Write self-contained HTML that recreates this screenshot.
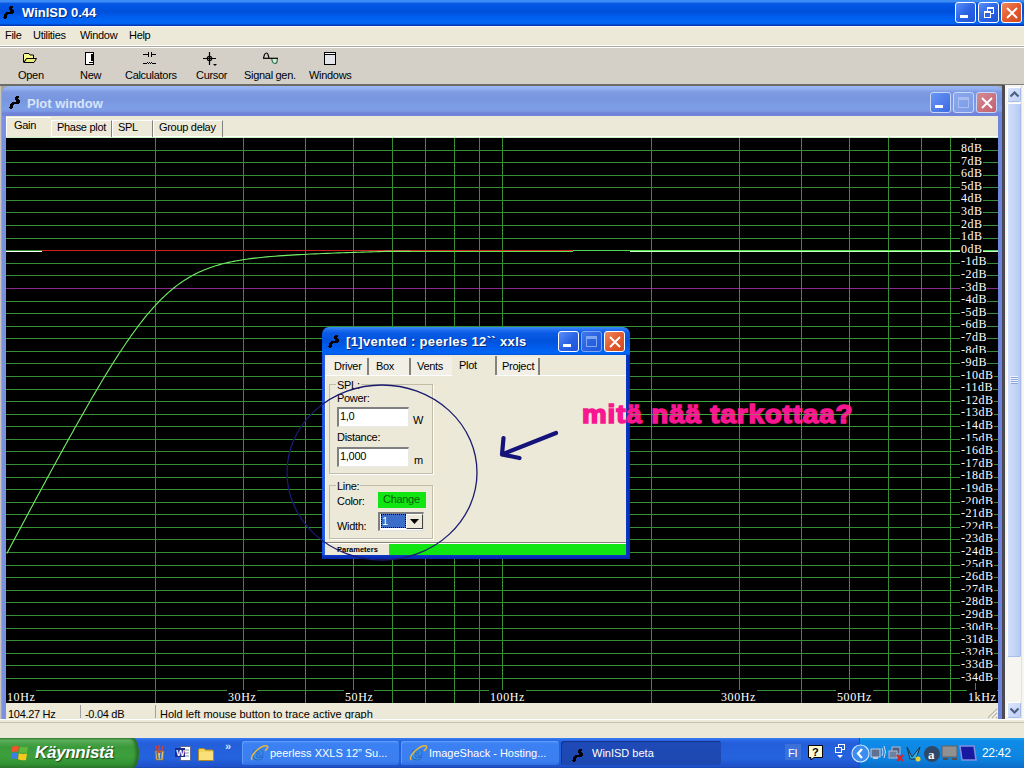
<!DOCTYPE html>
<html><head><meta charset="utf-8"><title>WinISD</title>
<style>
html,body{margin:0;padding:0;}
body{width:1024px;height:768px;overflow:hidden;position:relative;background:#D4D0C8;font-family:"Liberation Sans", sans-serif;font-size:11px;color:#000;}
.a{position:absolute;}
.t{position:absolute;white-space:nowrap;line-height:13px;letter-spacing:-0.3px;}
.xpbtn{position:absolute;width:21px;height:21px;box-sizing:border-box;border:1px solid #fff;border-radius:3px;}
.tb .t{font-size:11px;}
</style></head><body>

<div class="a" style="left:0;top:0;width:1024px;height:26px;background:linear-gradient(#3D8CF6 0px,#3D8CF6 2px,#0A5AE4 3px,#0055E4 6px,#0050DA 12px,#005CEC 16px,#0066F6 22px,#0060F0 24px,#0038B0 25px,#0038B0 26px);"></div>
<div class="t" style="left:22px;top:5px;font-size:13px;font-weight:bold;color:#fff;text-shadow:1px 1px 0 #0A2A7A;line-height:16px;letter-spacing:0;">WinISD 0.44</div>

<svg class="a" style="left:3px;top:6px" width="11" height="13" shape-rendering="crispEdges" fill="#000"><rect x="7" y="0" width="3" height="1"/><rect x="6" y="1" width="4" height="1"/><rect x="6" y="2" width="3" height="1"/><rect x="6" y="3" width="4" height="1"/><rect x="7" y="4" width="4" height="1"/><rect x="7" y="5" width="4" height="1"/><rect x="3" y="6" width="8" height="1"/><rect x="2" y="7" width="8" height="1"/><rect x="1" y="8" width="4" height="1"/><rect x="1" y="9" width="3" height="1"/><rect x="1" y="10" width="3" height="1"/><rect x="0" y="11" width="4" height="1"/><rect x="1" y="12" width="2" height="1"/></svg>
<div class="xpbtn" style="left:955px;top:2px;background:linear-gradient(135deg,#5C8FF8 0%,#2C64E6 50%,#1E52D8 100%);border-color:#fff"><div class="a" style="left:4px;top:12px;width:8px;height:3px;background:#fff"></div></div><div class="xpbtn" style="left:978px;top:2px;background:linear-gradient(135deg,#5C8FF8 0%,#2C64E6 50%,#1E52D8 100%);border-color:#fff"><div class="a" style="left:8px;top:4px;width:7px;height:7px;border:1px solid #fff;border-top-width:2px;box-sizing:border-box"></div><div class="a" style="left:5px;top:8px;width:7px;height:7px;border:1px solid #fff;border-top-width:2px;box-sizing:border-box;background:#2C64E6"></div></div><div class="xpbtn" style="left:1001px;top:2px;background:linear-gradient(135deg,#F08A60 0%,#E35A2E 50%,#D24A1E 100%);border-color:#fff"><svg class="a" style="left:3px;top:3px" width="14" height="14"><path d="M2 2 L12 12 M12 2 L2 12" stroke="#fff" stroke-width="1.9"/></svg></div>
<div class="a" style="left:0;top:26px;width:1024px;height:20px;background:#ECE9D8"></div>
<div class="a" style="left:0;top:26px;width:1024px;height:1px;background:#F4F6FC"></div>
<div class="a" style="left:0;top:45px;width:1024px;height:1px;background:#fff"></div>
<div class="a" style="left:0;top:46px;width:1024px;height:1px;background:#ACA899"></div>
<div class="a" style="left:0;top:47px;width:1024px;height:1px;background:#fff"></div>
<div class="t" style="left:5px;top:29px;">File</div>
<div class="t" style="left:33px;top:29px;">Utilities</div>
<div class="t" style="left:80px;top:29px;">Window</div>
<div class="t" style="left:129px;top:29px;">Help</div>
<div class="a" style="left:0;top:48px;width:1024px;height:37px;background:#D4D0C8"></div>
<div class="a" style="left:0;top:84px;width:1024px;height:1px;background:#808080"></div>
<div class="t" style="left:18px;top:69px;">Open</div>
<div class="t" style="left:80px;top:69px;">New</div>
<div class="t" style="left:125px;top:69px;">Calculators</div>
<div class="t" style="left:196px;top:69px;">Cursor</div>
<div class="t" style="left:244px;top:69px;">Signal gen.</div>
<div class="t" style="left:309px;top:69px;">Windows</div>
<svg class="a" style="left:22px;top:52px" width="16" height="12"><path d="M1.5 2.5 L2.5 1.5 L7 1.5 L8 3 L11.5 3 L11.5 6.5 L4.5 6.5 L2 10.5 L1.5 10 Z" fill="#F8F890" stroke="#000"/><path d="M4.5 6.5 L14.5 6.5 L12 10.5 L2 10.5 Z" fill="#ECEC80" stroke="#000"/></svg>
<svg class="a" style="left:85px;top:52px" width="9" height="13" shape-rendering="crispEdges"><rect x="0" y="0" width="9" height="13" fill="#000"/><rect x="1" y="1" width="7" height="1" fill="#fff"/><rect x="1" y="1" width="5" height="11" fill="#fff"/><rect x="6" y="2" width="2" height="7" fill="#000"/><rect x="4" y="9" width="4" height="1" fill="#fff"/><rect x="4" y="10" width="4" height="1" fill="#000"/><rect x="4" y="11" width="4" height="1" fill="#fff"/><rect x="4" y="12" width="1" height="0" fill="#fff"/></svg>
<svg class="a" style="left:142px;top:51px" width="16" height="14" shape-rendering="crispEdges"><rect x="1" y="3" width="6" height="1" fill="#000"/><rect x="9" y="3" width="5" height="1" fill="#000"/><rect x="6" y="1" width="1" height="5" fill="#000"/><rect x="9" y="1" width="1" height="5" fill="#000"/><rect x="1" y="12" width="4" height="1" fill="#000"/><rect x="11" y="12" width="3" height="1" fill="#000"/><rect x="5" y="11" width="1" height="1" fill="#000"/><rect x="6" y="12" width="1" height="1" fill="#000"/><rect x="7" y="11" width="1" height="1" fill="#000"/><rect x="8" y="12" width="1" height="1" fill="#000"/><rect x="9" y="11" width="1" height="1" fill="#000"/><rect x="10" y="12" width="1" height="1" fill="#000"/></svg>
<svg class="a" style="left:202px;top:51px" width="17" height="17"><path d="M1 7.5 H14 M7.5 1 V14" stroke="#000" stroke-width="1.2"/><circle cx="7.5" cy="7.5" r="2.2" fill="none" stroke="#000" stroke-width="1.2"/><path d="M11 13 L15 13 L13 15 Z" fill="#000"/></svg>
<svg class="a" style="left:262px;top:52px" width="18" height="13"><path d="M9.5 6 L10.5 10 Q11.5 11.5 13 11.5 Q14.5 11.5 15 10 L15.5 6" stroke="#2A6A48" fill="#D0ECD8" stroke-width="1.1"/><path d="M1.5 6 L2.5 2.5 Q3.5 1 4.5 1 Q5.5 1 6 2.5 L7 6" stroke="#000" fill="none" stroke-width="1.1"/><path d="M1 6.3 H16" stroke="#000" stroke-width="1.2"/></svg>
<svg class="a" style="left:324px;top:52px" width="12" height="13" shape-rendering="crispEdges"><rect width="12" height="13" fill="#000"/><rect x="1" y="1" width="10" height="1" fill="#fff"/><rect x="1" y="3" width="10" height="9" fill="#E4E4EC"/></svg>

<div class="a" style="left:0;top:85px;width:1003px;height:634px;background:#A8A498"></div>
<div class="a" style="left:0;top:84px;width:1003px;height:2px;background:#6E6C66"></div>
<div class="a" style="left:0;top:86px;width:1px;height:633px;background:#CAC6BA"></div>
<div class="a" style="left:2px;top:86px;width:1001px;height:640px;border-radius:7px 7px 0 0;background:linear-gradient(#9AB6F4 0px,#93B0F2 3px,#7E9AE2 6px,#7896E0 14px,#7E9FE8 22px,#7C9AE4 25px,#6F84D8 27px,#6F84D8 30px);"></div>
<div class="a" style="left:2px;top:116px;width:1001px;height:610px;background:linear-gradient(90deg,#7A90E4,#7388E0 60%,#6F84DC)"></div>
<div class="t" style="left:27px;top:96px;font-size:13px;font-weight:bold;color:#D8E4F8;line-height:16px;letter-spacing:0;">Plot window</div>
<svg class="a" style="left:9px;top:96px" width="11" height="13" shape-rendering="crispEdges" fill="#000"><rect x="7" y="0" width="3" height="1"/><rect x="6" y="1" width="4" height="1"/><rect x="6" y="2" width="3" height="1"/><rect x="6" y="3" width="4" height="1"/><rect x="7" y="4" width="4" height="1"/><rect x="7" y="5" width="4" height="1"/><rect x="3" y="6" width="8" height="1"/><rect x="2" y="7" width="8" height="1"/><rect x="1" y="8" width="4" height="1"/><rect x="1" y="9" width="3" height="1"/><rect x="1" y="10" width="3" height="1"/><rect x="0" y="11" width="4" height="1"/><rect x="1" y="12" width="2" height="1"/></svg>
<div class="xpbtn" style="left:930px;top:92px;background:linear-gradient(135deg,#6A96F4,#3A6AE2);border-color:#C8D6F8"><div class="a" style="left:4px;top:12px;width:8px;height:3px;background:#fff"></div></div><div class="xpbtn" style="left:953px;top:92px;background:linear-gradient(135deg,#8AA8EC,#7C9BE6);border-color:#C8D6F8"><div class="a" style="left:4px;top:4px;width:11px;height:11px;border:1px solid #A9BEEF;border-top-width:3px;box-sizing:border-box"></div></div><div class="xpbtn" style="left:976px;top:92px;background:linear-gradient(135deg,#D58A95,#C0606E);border-color:#C8D6F8"><svg class="a" style="left:3px;top:3px" width="14" height="14"><path d="M2 2 L12 12 M12 2 L2 12" stroke="#fff" stroke-width="1.9"/></svg></div>
<div class="a" style="left:6px;top:116px;width:992px;height:21px;background:#ECE9D8"></div>
<div class="a" style="left:6px;top:136px;width:992px;height:1px;background:#fff"></div>
<div class="a" style="left:6px;top:117px;width:44px;height:20px;background:#ECE9D8;border-top:1px solid #fff;border-left:1px solid #fff"></div>
<div class="t" style="left:14px;top:119px;">Gain</div>
<div class="a" style="left:51px;top:120px;width:59px;height:16px;border-top:1px solid #fff;border-left:1px solid #fff;border-right:1px solid #808080;"></div>
<div class="t" style="left:57px;top:121px;">Phase plot</div>
<div class="a" style="left:112px;top:120px;width:39px;height:16px;border-top:1px solid #fff;border-left:1px solid #fff;border-right:1px solid #808080;"></div>
<div class="t" style="left:118px;top:121px;">SPL</div>
<div class="a" style="left:153px;top:120px;width:68px;height:16px;border-top:1px solid #fff;border-left:1px solid #fff;border-right:1px solid #808080;"></div>
<div class="t" style="left:159px;top:121px;">Group delay</div>
<svg class="a" style="left:6px;top:137px" width="992" height="566" shape-rendering="crispEdges">
<rect width="992" height="566" fill="#000"/>
<rect x="0" y="0" width="992" height="1" fill="#C8F0C0"/>
<rect x="0" y="13" width="992" height="1" fill="#359035"/>
<rect x="0" y="25" width="992" height="1" fill="#359035"/>
<rect x="0" y="38" width="992" height="1" fill="#359035"/>
<rect x="0" y="50" width="992" height="1" fill="#359035"/>
<rect x="0" y="63" width="992" height="1" fill="#359035"/>
<rect x="0" y="75" width="992" height="1" fill="#359035"/>
<rect x="0" y="88" width="992" height="1" fill="#359035"/>
<rect x="0" y="101" width="992" height="1" fill="#359035"/>
<rect x="0" y="113" width="992" height="1" fill="#359035"/>
<rect x="0" y="126" width="992" height="1" fill="#359035"/>
<rect x="0" y="138" width="992" height="1" fill="#359035"/>
<rect x="0" y="151" width="992" height="1" fill="#8A2A8A"/>
<rect x="0" y="164" width="992" height="1" fill="#359035"/>
<rect x="0" y="176" width="992" height="1" fill="#359035"/>
<rect x="0" y="189" width="992" height="1" fill="#359035"/>
<rect x="0" y="201" width="992" height="1" fill="#359035"/>
<rect x="0" y="214" width="992" height="1" fill="#359035"/>
<rect x="0" y="226" width="992" height="1" fill="#359035"/>
<rect x="0" y="239" width="992" height="1" fill="#359035"/>
<rect x="0" y="252" width="992" height="1" fill="#359035"/>
<rect x="0" y="264" width="992" height="1" fill="#359035"/>
<rect x="0" y="277" width="992" height="1" fill="#359035"/>
<rect x="0" y="289" width="992" height="1" fill="#359035"/>
<rect x="0" y="302" width="992" height="1" fill="#359035"/>
<rect x="0" y="314" width="992" height="1" fill="#359035"/>
<rect x="0" y="327" width="992" height="1" fill="#359035"/>
<rect x="0" y="340" width="992" height="1" fill="#359035"/>
<rect x="0" y="352" width="992" height="1" fill="#359035"/>
<rect x="0" y="365" width="992" height="1" fill="#359035"/>
<rect x="0" y="377" width="992" height="1" fill="#359035"/>
<rect x="0" y="390" width="992" height="1" fill="#359035"/>
<rect x="0" y="402" width="992" height="1" fill="#359035"/>
<rect x="0" y="415" width="992" height="1" fill="#359035"/>
<rect x="0" y="428" width="992" height="1" fill="#359035"/>
<rect x="0" y="440" width="992" height="1" fill="#359035"/>
<rect x="0" y="453" width="992" height="1" fill="#359035"/>
<rect x="0" y="465" width="992" height="1" fill="#359035"/>
<rect x="0" y="478" width="992" height="1" fill="#359035"/>
<rect x="0" y="491" width="992" height="1" fill="#359035"/>
<rect x="0" y="503" width="992" height="1" fill="#359035"/>
<rect x="0" y="516" width="992" height="1" fill="#359035"/>
<rect x="0" y="528" width="992" height="1" fill="#359035"/>
<rect x="0" y="541" width="992" height="1" fill="#359035"/>
<rect x="0" y="553" width="992" height="1" fill="#359035"/>
<rect x="149" y="1" width="1" height="566" fill="#359035"/>
<rect x="237" y="1" width="1" height="566" fill="#359035"/>
<rect x="299" y="1" width="1" height="566" fill="#359035"/>
<rect x="347" y="1" width="1" height="566" fill="#359035"/>
<rect x="386" y="1" width="1" height="566" fill="#359035"/>
<rect x="419" y="1" width="1" height="566" fill="#359035"/>
<rect x="448" y="1" width="1" height="566" fill="#359035"/>
<rect x="473" y="1" width="1" height="566" fill="#359035"/>
<rect x="496" y="1" width="1" height="566" fill="#359035"/>
<rect x="645" y="1" width="1" height="566" fill="#359035"/>
<rect x="733" y="1" width="1" height="566" fill="#359035"/>
<rect x="795" y="1" width="1" height="566" fill="#359035"/>
<rect x="843" y="1" width="1" height="566" fill="#359035"/>
<rect x="882" y="1" width="1" height="566" fill="#359035"/>
<rect x="915" y="1" width="1" height="566" fill="#359035"/>
<rect x="944" y="1" width="1" height="566" fill="#359035"/>
<rect x="969" y="1" width="1" height="566" fill="#359035"/>
<rect x="0" y="114" width="36" height="1" fill="#fff"/>
<rect x="36" y="113" width="531" height="1" fill="#D02020"/>
<rect x="404" y="114" width="163" height="1" fill="#60E050"/>
<rect x="567" y="113" width="425" height="1" fill="#50D850"/>
<rect x="624" y="114" width="368" height="1" fill="#C8FFC0"/>
<path d="M0.80 416.61 L1.80 414.73 L2.80 412.84 L3.80 410.96 L4.80 409.08 L5.80 407.20 L6.80 405.31 L7.80 403.43 L8.80 401.55 L9.80 399.68 L10.80 397.80 L11.80 395.92 L12.80 394.05 L13.80 392.17 L14.80 390.30 L15.80 388.42 L16.80 386.55 L17.80 384.68 L18.80 382.81 L19.80 380.94 L20.80 379.07 L21.80 377.21 L22.80 375.34 L23.80 373.47 L24.80 371.61 L25.80 369.75 L26.80 367.89 L27.80 366.03 L28.80 364.17 L29.80 362.31 L30.80 360.45 L31.80 358.60 L32.80 356.74 L33.80 354.89 L34.80 353.04 L35.80 351.18 L36.80 349.34 L37.80 347.49 L38.80 345.64 L39.80 343.80 L40.80 341.95 L41.80 340.11 L42.80 338.27 L43.80 336.43 L44.80 334.59 L45.80 332.76 L46.80 330.92 L47.80 329.09 L48.80 327.26 L49.80 325.43 L50.80 323.61 L51.80 321.78 L52.80 319.96 L53.80 318.14 L54.80 316.32 L55.80 314.50 L56.80 312.68 L57.80 310.87 L58.80 309.06 L59.80 307.25 L60.80 305.45 L61.80 303.64 L62.80 301.84 L63.80 300.04 L64.80 298.25 L65.80 296.45 L66.80 294.66 L67.80 292.88 L68.80 291.09 L69.80 289.31 L70.80 287.53 L71.80 285.76 L72.80 283.98 L73.80 282.21 L74.80 280.45 L75.80 278.69 L76.80 276.93 L77.80 275.17 L78.80 273.42 L79.80 271.68 L80.80 269.93 L81.80 268.19 L82.80 266.46 L83.80 264.73 L84.80 263.00 L85.80 261.28 L86.80 259.56 L87.80 257.85 L88.80 256.14 L89.80 254.44 L90.80 252.74 L91.80 251.05 L92.80 249.37 L93.80 247.69 L94.80 246.01 L95.80 244.34 L96.80 242.68 L97.80 241.02 L98.80 239.37 L99.80 237.73 L100.80 236.09 L101.80 234.46 L102.80 232.84 L103.80 231.22 L104.80 229.62 L105.80 228.01 L106.80 226.42 L107.80 224.84 L108.80 223.26 L109.80 221.69 L110.80 220.13 L111.80 218.58 L112.80 217.04 L113.80 215.50 L114.80 213.98 L115.80 212.46 L116.80 210.96 L117.80 209.46 L118.80 207.97 L119.80 206.50 L120.80 205.03 L121.80 203.58 L122.80 202.14 L123.80 200.70 L124.80 199.28 L125.80 197.87 L126.80 196.47 L127.80 195.09 L128.80 193.71 L129.80 192.35 L130.80 191.00 L131.80 189.66 L132.80 188.34 L133.80 187.03 L134.80 185.73 L135.80 184.44 L136.80 183.17 L137.80 181.91 L138.80 180.66 L139.80 179.43 L140.80 178.22 L141.80 177.01 L142.80 175.82 L143.80 174.65 L144.80 173.49 L145.80 172.35 L146.80 171.22 L147.80 170.10 L148.80 169.00 L149.80 167.91 L150.80 166.84 L151.80 165.79 L152.80 164.75 L153.80 163.72 L154.80 162.71 L155.80 161.72 L156.80 160.74 L157.80 159.78 L158.80 158.83 L159.80 157.90 L160.80 156.98 L161.80 156.08 L162.80 155.19 L163.80 154.32 L164.80 153.47 L165.80 152.63 L166.80 151.80 L167.80 150.99 L168.80 150.20 L169.80 149.42 L170.80 148.65 L171.80 147.90 L172.80 147.17 L173.80 146.44 L174.80 145.74 L175.80 145.05 L176.80 144.37 L177.80 143.70 L178.80 143.05 L179.80 142.42 L180.80 141.79 L181.80 141.18 L182.80 140.59 L183.80 140.00 L184.80 139.43 L185.80 138.87 L186.80 138.33 L187.80 137.79 L188.80 137.27 L189.80 136.76 L190.80 136.27 L191.80 135.78 L192.80 135.31 L193.80 134.84 L194.80 134.39 L195.80 133.95 L196.80 133.52 L197.80 133.10 L198.80 132.69 L199.80 132.29 L200.80 131.90 L201.80 131.52 L202.80 131.14 L203.80 130.78 L204.80 130.43 L205.80 130.08 L206.80 129.75 L207.80 129.42 L208.80 129.10 L209.80 128.79 L210.80 128.48 L211.80 128.19 L212.80 127.90 L213.80 127.62 L214.80 127.34 L215.80 127.08 L216.80 126.82 L217.80 126.56 L218.80 126.31 L219.80 126.07 L220.80 125.84 L221.80 125.61 L222.80 125.38 L223.80 125.16 L224.80 124.95 L225.80 124.74 L226.80 124.54 L227.80 124.34 L228.80 124.15 L229.80 123.96 L230.80 123.78 L231.80 123.60 L232.80 123.43 L233.80 123.26 L234.80 123.09 L235.80 122.93 L236.80 122.77 L237.80 122.62 L238.80 122.47 L239.80 122.32 L240.80 122.18 L241.80 122.04 L242.80 121.90 L243.80 121.77 L244.80 121.64 L248.80 121.14 L252.80 120.69 L256.80 120.28 L260.80 119.90 L264.80 119.54 L268.80 119.22 L272.80 118.92 L276.80 118.63 L280.80 118.37 L284.80 118.12 L288.80 117.88 L292.80 117.66 L296.80 117.45 L300.80 117.24 L304.80 117.05 L308.80 116.87 L312.80 116.69 L316.80 116.52 L320.80 116.35 L324.80 116.20 L328.80 116.04 L332.80 115.89 L336.80 115.75 L340.80 115.61 L344.80 115.47 L348.80 115.34 L352.80 115.21 L356.80 115.08 L360.80 114.96 L364.80 114.84 L368.80 114.73 L372.80 114.61 L376.80 114.50 L380.80 114.40 L384.80 114.33 L388.80 114.33 L392.80 114.33 L396.80 114.33 L400.80 114.33 L404.80 114.33" stroke="#74F068" stroke-width="1.1" fill="none" shape-rendering="auto"/>
</svg>
<div class="t" style="left:960px;top:140px;height:13px;padding-top:2px;font-family:'Liberation Serif', serif;font-size:12px;line-height:12px;color:#fff;background:#000;padding-left:1px;letter-spacing:0.5px">8dB</div>
<div class="t" style="left:960px;top:152px;height:12px;padding-top:3px;font-family:'Liberation Serif', serif;font-size:12px;line-height:12px;color:#fff;background:#000;padding-left:1px;letter-spacing:0.5px">7dB</div>
<div class="t" style="left:960px;top:165px;height:13px;padding-top:2px;font-family:'Liberation Serif', serif;font-size:12px;line-height:12px;color:#fff;background:#000;padding-left:1px;letter-spacing:0.5px">6dB</div>
<div class="t" style="left:960px;top:177px;height:12px;padding-top:3px;font-family:'Liberation Serif', serif;font-size:12px;line-height:12px;color:#fff;background:#000;padding-left:1px;letter-spacing:0.5px">5dB</div>
<div class="t" style="left:960px;top:190px;height:13px;padding-top:2px;font-family:'Liberation Serif', serif;font-size:12px;line-height:12px;color:#fff;background:#000;padding-left:1px;letter-spacing:0.5px">4dB</div>
<div class="t" style="left:960px;top:202px;height:12px;padding-top:3px;font-family:'Liberation Serif', serif;font-size:12px;line-height:12px;color:#fff;background:#000;padding-left:1px;letter-spacing:0.5px">3dB</div>
<div class="t" style="left:960px;top:215px;height:12px;padding-top:3px;font-family:'Liberation Serif', serif;font-size:12px;line-height:12px;color:#fff;background:#000;padding-left:1px;letter-spacing:0.5px">2dB</div>
<div class="t" style="left:960px;top:228px;height:13px;padding-top:2px;font-family:'Liberation Serif', serif;font-size:12px;line-height:12px;color:#fff;background:#000;padding-left:1px;letter-spacing:0.5px">1dB</div>
<div class="t" style="left:960px;top:240px;height:12px;padding-top:3px;font-family:'Liberation Serif', serif;font-size:12px;line-height:12px;color:#fff;background:#000;padding-left:1px;letter-spacing:0.5px">0dB</div>
<div class="t" style="left:960px;top:253px;height:13px;padding-top:2px;font-family:'Liberation Serif', serif;font-size:12px;line-height:12px;color:#fff;background:#000;padding-left:1px;letter-spacing:0.5px">-1dB</div>
<div class="t" style="left:960px;top:265px;height:12px;padding-top:3px;font-family:'Liberation Serif', serif;font-size:12px;line-height:12px;color:#fff;background:#000;padding-left:1px;letter-spacing:0.5px">-2dB</div>
<div class="t" style="left:960px;top:278px;height:12px;padding-top:3px;font-family:'Liberation Serif', serif;font-size:12px;line-height:12px;color:#fff;background:#000;padding-left:1px;letter-spacing:0.5px">-3dB</div>
<div class="t" style="left:960px;top:291px;height:13px;padding-top:2px;font-family:'Liberation Serif', serif;font-size:12px;line-height:12px;color:#fff;background:#000;padding-left:1px;letter-spacing:0.5px">-4dB</div>
<div class="t" style="left:960px;top:303px;height:12px;padding-top:3px;font-family:'Liberation Serif', serif;font-size:12px;line-height:12px;color:#fff;background:#000;padding-left:1px;letter-spacing:0.5px">-5dB</div>
<div class="t" style="left:960px;top:316px;height:13px;padding-top:2px;font-family:'Liberation Serif', serif;font-size:12px;line-height:12px;color:#fff;background:#000;padding-left:1px;letter-spacing:0.5px">-6dB</div>
<div class="t" style="left:960px;top:328px;height:12px;padding-top:3px;font-family:'Liberation Serif', serif;font-size:12px;line-height:12px;color:#fff;background:#000;padding-left:1px;letter-spacing:0.5px">-7dB</div>
<div class="t" style="left:960px;top:341px;height:12px;padding-top:3px;font-family:'Liberation Serif', serif;font-size:12px;line-height:12px;color:#fff;background:#000;padding-left:1px;letter-spacing:0.5px">-8dB</div>
<div class="t" style="left:960px;top:353px;height:12px;padding-top:3px;font-family:'Liberation Serif', serif;font-size:12px;line-height:12px;color:#fff;background:#000;padding-left:1px;letter-spacing:0.5px">-9dB</div>
<div class="t" style="left:960px;top:366px;height:12px;padding-top:3px;font-family:'Liberation Serif', serif;font-size:12px;line-height:12px;color:#fff;background:#000;padding-left:1px;letter-spacing:0.5px">-10dB</div>
<div class="t" style="left:960px;top:379px;height:13px;padding-top:2px;font-family:'Liberation Serif', serif;font-size:12px;line-height:12px;color:#fff;background:#000;padding-left:1px;letter-spacing:0.5px">-11dB</div>
<div class="t" style="left:960px;top:391px;height:12px;padding-top:3px;font-family:'Liberation Serif', serif;font-size:12px;line-height:12px;color:#fff;background:#000;padding-left:1px;letter-spacing:0.5px">-12dB</div>
<div class="t" style="left:960px;top:404px;height:13px;padding-top:2px;font-family:'Liberation Serif', serif;font-size:12px;line-height:12px;color:#fff;background:#000;padding-left:1px;letter-spacing:0.5px">-13dB</div>
<div class="t" style="left:960px;top:416px;height:12px;padding-top:3px;font-family:'Liberation Serif', serif;font-size:12px;line-height:12px;color:#fff;background:#000;padding-left:1px;letter-spacing:0.5px">-14dB</div>
<div class="t" style="left:960px;top:429px;height:12px;padding-top:3px;font-family:'Liberation Serif', serif;font-size:12px;line-height:12px;color:#fff;background:#000;padding-left:1px;letter-spacing:0.5px">-15dB</div>
<div class="t" style="left:960px;top:441px;height:12px;padding-top:3px;font-family:'Liberation Serif', serif;font-size:12px;line-height:12px;color:#fff;background:#000;padding-left:1px;letter-spacing:0.5px">-16dB</div>
<div class="t" style="left:960px;top:454px;height:12px;padding-top:3px;font-family:'Liberation Serif', serif;font-size:12px;line-height:12px;color:#fff;background:#000;padding-left:1px;letter-spacing:0.5px">-17dB</div>
<div class="t" style="left:960px;top:467px;height:13px;padding-top:2px;font-family:'Liberation Serif', serif;font-size:12px;line-height:12px;color:#fff;background:#000;padding-left:1px;letter-spacing:0.5px">-18dB</div>
<div class="t" style="left:960px;top:479px;height:12px;padding-top:3px;font-family:'Liberation Serif', serif;font-size:12px;line-height:12px;color:#fff;background:#000;padding-left:1px;letter-spacing:0.5px">-19dB</div>
<div class="t" style="left:960px;top:492px;height:12px;padding-top:3px;font-family:'Liberation Serif', serif;font-size:12px;line-height:12px;color:#fff;background:#000;padding-left:1px;letter-spacing:0.5px">-20dB</div>
<div class="t" style="left:960px;top:504px;height:12px;padding-top:3px;font-family:'Liberation Serif', serif;font-size:12px;line-height:12px;color:#fff;background:#000;padding-left:1px;letter-spacing:0.5px">-21dB</div>
<div class="t" style="left:960px;top:517px;height:12px;padding-top:3px;font-family:'Liberation Serif', serif;font-size:12px;line-height:12px;color:#fff;background:#000;padding-left:1px;letter-spacing:0.5px">-22dB</div>
<div class="t" style="left:960px;top:529px;height:12px;padding-top:3px;font-family:'Liberation Serif', serif;font-size:12px;line-height:12px;color:#fff;background:#000;padding-left:1px;letter-spacing:0.5px">-23dB</div>
<div class="t" style="left:960px;top:542px;height:12px;padding-top:3px;font-family:'Liberation Serif', serif;font-size:12px;line-height:12px;color:#fff;background:#000;padding-left:1px;letter-spacing:0.5px">-24dB</div>
<div class="t" style="left:960px;top:555px;height:12px;padding-top:3px;font-family:'Liberation Serif', serif;font-size:12px;line-height:12px;color:#fff;background:#000;padding-left:1px;letter-spacing:0.5px">-25dB</div>
<div class="t" style="left:960px;top:567px;height:12px;padding-top:3px;font-family:'Liberation Serif', serif;font-size:12px;line-height:12px;color:#fff;background:#000;padding-left:1px;letter-spacing:0.5px">-26dB</div>
<div class="t" style="left:960px;top:580px;height:12px;padding-top:3px;font-family:'Liberation Serif', serif;font-size:12px;line-height:12px;color:#fff;background:#000;padding-left:1px;letter-spacing:0.5px">-27dB</div>
<div class="t" style="left:960px;top:592px;height:12px;padding-top:3px;font-family:'Liberation Serif', serif;font-size:12px;line-height:12px;color:#fff;background:#000;padding-left:1px;letter-spacing:0.5px">-28dB</div>
<div class="t" style="left:960px;top:605px;height:12px;padding-top:3px;font-family:'Liberation Serif', serif;font-size:12px;line-height:12px;color:#fff;background:#000;padding-left:1px;letter-spacing:0.5px">-29dB</div>
<div class="t" style="left:960px;top:618px;height:12px;padding-top:3px;font-family:'Liberation Serif', serif;font-size:12px;line-height:12px;color:#fff;background:#000;padding-left:1px;letter-spacing:0.5px">-30dB</div>
<div class="t" style="left:960px;top:630px;height:12px;padding-top:3px;font-family:'Liberation Serif', serif;font-size:12px;line-height:12px;color:#fff;background:#000;padding-left:1px;letter-spacing:0.5px">-31dB</div>
<div class="t" style="left:960px;top:643px;height:12px;padding-top:3px;font-family:'Liberation Serif', serif;font-size:12px;line-height:12px;color:#fff;background:#000;padding-left:1px;letter-spacing:0.5px">-32dB</div>
<div class="t" style="left:960px;top:655px;height:12px;padding-top:3px;font-family:'Liberation Serif', serif;font-size:12px;line-height:12px;color:#fff;background:#000;padding-left:1px;letter-spacing:0.5px">-33dB</div>
<div class="t" style="left:960px;top:668px;height:12px;padding-top:3px;font-family:'Liberation Serif', serif;font-size:12px;line-height:12px;color:#fff;background:#000;padding-left:1px;letter-spacing:0.5px">-34dB</div>
<div class="t" style="left:6px;top:690px;height:13px;font-family:'Liberation Serif', serif;font-size:12px;line-height:14px;color:#fff;background:#000;padding:0 1px;letter-spacing:0.6px">10Hz</div>
<div class="t" style="left:227px;top:690px;height:13px;font-family:'Liberation Serif', serif;font-size:12px;line-height:14px;color:#fff;background:#000;padding:0 1px;letter-spacing:0.6px">30Hz</div>
<div class="t" style="left:344px;top:690px;height:13px;font-family:'Liberation Serif', serif;font-size:12px;line-height:14px;color:#fff;background:#000;padding:0 1px;letter-spacing:0.6px">50Hz</div>
<div class="t" style="left:489px;top:690px;height:13px;font-family:'Liberation Serif', serif;font-size:12px;line-height:14px;color:#fff;background:#000;padding:0 1px;letter-spacing:0.6px">100Hz</div>
<div class="t" style="left:720px;top:690px;height:13px;font-family:'Liberation Serif', serif;font-size:12px;line-height:14px;color:#fff;background:#000;padding:0 1px;letter-spacing:0.6px">300Hz</div>
<div class="t" style="left:836px;top:690px;height:13px;font-family:'Liberation Serif', serif;font-size:12px;line-height:14px;color:#fff;background:#000;padding:0 1px;letter-spacing:0.6px">500Hz</div>
<div class="t" style="left:967px;top:690px;height:13px;font-family:'Liberation Serif', serif;font-size:12px;line-height:14px;color:#fff;background:#000;padding:0 1px;letter-spacing:0.6px">1kHz</div>
<div class="a" style="left:6px;top:703px;width:992px;height:16px;background:#ECE9D8"></div>
<div class="a" style="left:80px;top:705px;width:1px;height:13px;background:#A0A0A0"></div>
<div class="a" style="left:155px;top:705px;width:1px;height:13px;background:#A0A0A0"></div>
<svg class="a" style="left:985px;top:706px" width="13" height="13"><path d="M12 3 L3 12 M12 7 L7 12 M12 11 L11 12" stroke="#B8B4A0" stroke-width="1.2"/><path d="M12 4.5 L4.5 12 M12 8.5 L8.5 12" stroke="#fff" stroke-width="0.9"/></svg>
<div class="t" style="left:8px;top:708px;">104.27 Hz</div>
<div class="t" style="left:85px;top:708px;">-0.04 dB</div>
<div class="t" style="left:160px;top:708px;letter-spacing:0">Hold left mouse button to trace active graph</div>
<div class="a" style="left:1002px;top:85px;width:3px;height:634px;background:#4A4A50"></div>
<div class="a" style="left:1005px;top:85px;width:19px;height:634px;background:#F6F5F0"></div>
<div class="a" style="left:1021px;top:85px;width:1px;height:634px;background:#E4E2DA"></div>
<div class="a" style="left:1007px;top:103px;width:14px;height:554px;background:linear-gradient(90deg,#D0DCFA,#C4D4F8 60%,#B8CAF2);border:1px solid #A8BCEA;border-top-color:#fff;border-left-color:#fff;box-sizing:border-box;border-radius:2px"></div>
<svg class="a" style="left:1010px;top:376px" width="8" height="8" shape-rendering="crispEdges"><path d="M0 0.5 H8 M0 2.5 H8 M0 4.5 H8 M0 6.5 H8" stroke="#EEF3FF"/><path d="M1 1.5 H8 M1 3.5 H8 M1 5.5 H8 M1 7.5 H8" stroke="#8CA6DA"/></svg>
<div class="a" style="left:1007px;top:87px;width:14px;height:15px;background:linear-gradient(135deg,#DCE6FC,#C0D0F6);border:1px solid #fff;border-right-color:#A8BCEA;border-bottom-color:#A8BCEA;box-sizing:border-box;border-radius:2px"><svg class="a" style="left:1px;top:3px" width="11" height="7"><path d="M1.5 5.5 L5.5 1.5 L9.5 5.5" stroke="#4D6185" stroke-width="2.2" fill="none"/></svg></div>
<div class="a" style="left:1007px;top:702px;width:14px;height:16px;background:linear-gradient(135deg,#DCE6FC,#C0D0F6);border:1px solid #fff;border-right-color:#A8BCEA;border-bottom-color:#A8BCEA;box-sizing:border-box;border-radius:2px"><svg class="a" style="left:1px;top:4px" width="11" height="7"><path d="M1.5 1.5 L5.5 5.5 L9.5 1.5" stroke="#4D6185" stroke-width="2.2" fill="none"/></svg></div>
<div class="a" style="left:0;top:719px;width:1024px;height:19px;background:#ECE9D8"></div>
<div class="a" style="left:0;top:719px;width:1024px;height:1px;background:#fff"></div>
<div class="a" style="left:0;top:722px;width:1024px;height:1px;background:#C5C2B2"></div>
<div class="a" style="left:0;top:738px;width:1024px;height:30px;background:linear-gradient(#3A80F3 0px,#2A6AE8 2px,#245EDB 5px,#2563DE 20px,#1D4FC8 29px,#1941A5 30px)"></div>
<div class="a" style="left:0;top:738px;width:139px;height:30px;border-radius:0 6px 6px 0 / 0 15px 15px 0;background:linear-gradient(#3A8A3A 0px,#5EB05E 2px,#4CA44C 5px,#3A9A3A 9px,#3CA03C 18px,#349434 25px,#2A7E2C 30px);box-shadow:inset -3px 0 3px #2A6A2A"></div>
<div class="t" style="left:35px;top:743px;font-size:17px;line-height:20px;font-weight:bold;font-style:italic;color:#fff;text-shadow:1px 1px 1px #1A4A1A">Käynnistä</div>
<svg class="a" style="left:11px;top:744px" width="18" height="18"><path d="M1 3 Q4 1 8 2.5 L7 8 Q3.5 7 0.5 8.5 Z" fill="#F0542A"/><path d="M9 2.5 Q12.5 4 17 2.5 L16 8.5 Q12 9.5 8 8.2 Z" fill="#5FB83A"/><path d="M0.3 9.5 Q3.5 8 7 9 L6.2 15 Q3 14 0 15.5 Z" fill="#3A7FE8"/><path d="M7.8 9.2 Q12 10.5 16 9.5 L15 16 Q11 17 7 15.2 Z" fill="#F8C820"/></svg>
<svg class="a" style="left:153px;top:745px" width="13" height="16"><path d="M2 6 L11 6 L10 15 L3 15 Z" fill="#E8C060" stroke="#8A6A30" stroke-width="0.8"/><path d="M3 1 L5 8 M6 0 L6.5 8 M10 1 L8 8" stroke="#D84030" stroke-width="1.5"/><path d="M4 7 L5 14 M8 7 L7.5 14" stroke="#3070D0" stroke-width="1.5"/></svg>
<svg class="a" style="left:175px;top:746px" width="17" height="15"><rect x="5.5" y="0.5" width="10" height="14" fill="#fff" stroke="#5A6A9A"/><path d="M8 4 H14 M8 7 H14 M8 10 H14" stroke="#8090B0"/><rect x="0" y="2" width="10" height="9" fill="#1A2A8A"/><text x="1.3" y="9.6" font-family="Liberation Sans" font-weight="bold" font-size="9" fill="#fff">W</text></svg>
<svg class="a" style="left:198px;top:748px" width="16" height="13"><path d="M0.5 2 Q0.5 0.5 2 0.5 L6 0.5 L7.5 2 L14 2 Q15.5 2 15.5 3.5 L15.5 12.5 L0.5 12.5 Z" fill="#F4D45C" stroke="#B08A20"/><rect x="1" y="4" width="14" height="8" fill="#FAE07A"/></svg>
<div class="t" style="left:225px;top:740px;font-size:11px;color:#D8E4FF;font-weight:bold">&#187;</div>

<div class="a" style="left:242px;top:741px;width:157px;height:24px;background:linear-gradient(#4B90F8 0px,#3C81F3 3px,#3A7EF0 20px,#3270E0 24px);border-radius:3px;box-shadow:inset 1px 1px 0 #5C9CFA"></div><svg class="a" style="left:250px;top:743px" width="20" height="20"><text x="2" y="17" font-family="Liberation Sans" font-weight="bold" font-size="21" fill="#3A98EC" stroke="#1A5AB0" stroke-width="0.6">e</text><path d="M2 17 Q0 14 6 8 Q13 2 17 3 Q19 4 15 8" fill="none" stroke="#E8B838" stroke-width="1.5"/></svg><div class="t" style="left:270px;top:747px;color:#fff;font-size:11px;letter-spacing:0">peerless XXLS 12&#8221; Su...</div>
<div class="a" style="left:401px;top:741px;width:158px;height:24px;background:linear-gradient(#4B90F8 0px,#3C81F3 3px,#3A7EF0 20px,#3270E0 24px);border-radius:3px;box-shadow:inset 1px 1px 0 #5C9CFA"></div><svg class="a" style="left:409px;top:743px" width="20" height="20"><text x="2" y="17" font-family="Liberation Sans" font-weight="bold" font-size="21" fill="#3A98EC" stroke="#1A5AB0" stroke-width="0.6">e</text><path d="M2 17 Q0 14 6 8 Q13 2 17 3 Q19 4 15 8" fill="none" stroke="#E8B838" stroke-width="1.5"/></svg><div class="t" style="left:429px;top:747px;color:#fff;font-size:11px;letter-spacing:0">ImageShack - Hosting...</div>
<div class="a" style="left:561px;top:741px;width:160px;height:24px;background:linear-gradient(#1E4AB8,#1E48B0);border-radius:3px;box-shadow:inset 1px 1px 0 #17338A"></div><svg class="a" style="left:572px;top:749px" width="11" height="13" shape-rendering="crispEdges" fill="#000"><rect x="7" y="0" width="3" height="1"/><rect x="6" y="1" width="4" height="1"/><rect x="6" y="2" width="3" height="1"/><rect x="6" y="3" width="4" height="1"/><rect x="7" y="4" width="4" height="1"/><rect x="7" y="5" width="4" height="1"/><rect x="3" y="6" width="8" height="1"/><rect x="2" y="7" width="8" height="1"/><rect x="1" y="8" width="4" height="1"/><rect x="1" y="9" width="3" height="1"/><rect x="1" y="10" width="3" height="1"/><rect x="0" y="11" width="4" height="1"/><rect x="1" y="12" width="2" height="1"/></svg><div class="t" style="left:592px;top:747px;color:#fff;font-size:11px;letter-spacing:0">WinISD beta</div>
<div class="a" style="left:785px;top:744px;width:16px;height:16px;background:#3C72D8"></div><div class="t" style="left:788px;top:747px;color:#fff;font-size:11px">FI</div>
<svg class="a" style="left:808px;top:745px" width="15" height="16"><path d="M0.5 0.5 H14.5 V12.5 H6 L3 15 V12.5 H0.5 Z" fill="#FFFAD0" stroke="#000"/><text x="4" y="10.5" font-family="Liberation Sans" font-weight="bold" font-size="11" fill="#000">?</text></svg>
<svg class="a" style="left:834px;top:744px" width="12" height="16"><rect x="4.5" y="0.5" width="6" height="5" fill="none" stroke="#fff"/><rect x="1.5" y="3.5" width="6" height="5" fill="#2A60D8" stroke="#fff"/><path d="M3 11 L9 11 L6 14 Z" fill="#fff"/></svg>
<div class="a" style="left:859px;top:738px;width:165px;height:30px;background:linear-gradient(#1AA2F0 0px,#0F8CE8 3px,#0C85E0 20px,#0A6CC8 30px);border-left:1px solid #1450B8"></div>
<svg class="a" style="left:851px;top:744px" width="19" height="19"><circle cx="9.5" cy="9.5" r="8.5" fill="#3A8EF0" stroke="#D0E4FF" stroke-width="1.2"/><path d="M11 5 L7 9.5 L11 14" stroke="#fff" stroke-width="2.2" fill="none"/></svg>
<svg class="a" style="left:870px;top:745px" width="110" height="18">
<rect x="1" y="4" width="9" height="8" fill="#607090" stroke="#C0C8E0"/><rect x="3" y="12" width="5" height="2" fill="#C0C8E0"/><path d="M12 3 Q14 7 12 11 M14 1 Q17 7 14 13" stroke="#D0D8F0" fill="none"/>
<rect x="22" y="2" width="8" height="7" fill="#506080" stroke="#B0B8D0"/><rect x="19" y="6" width="8" height="7" fill="#7080A0" stroke="#B0B8D0"/><path d="M27 10 L33 16 M33 10 L27 16" stroke="#E02020" stroke-width="2"/>
<path d="M37 2 L42 12 L50 2 L46 14 L40 14 Z" fill="#30B0E0" stroke="#203040"/><circle cx="48" cy="14" r="2.5" fill="#E8D030"/>
<circle cx="62" cy="9" r="8" fill="#304868"/><text x="58" y="13.5" font-family="Liberation Serif" font-weight="bold" font-size="13" fill="#fff">a</text>
<rect x="72" y="1" width="15" height="11" fill="#909090" stroke="#606060"/><rect x="73" y="13" width="5" height="2" fill="#505050"/><rect x="82" y="13" width="5" height="2" fill="#505050"/>
<path d="M90 1 L104 1 L106 15 L92 15 Z" fill="#1818A0" stroke="#8090E0" stroke-width="1.5"/>
</svg>
<div class="t" style="left:982px;top:746px;color:#fff;font-size:12px;line-height:14px">22:42</div>
<div class="a" style="left:322px;top:327px;width:308px;height:232px;border-radius:7px 7px 0 0;background:linear-gradient(#3A8CF8 0px,#1F6EF0 3px,#0A5AE6 6px,#0052DC 14px,#0060F0 22px,#0064F4 26px,#0054E0 28px,#0050D8 100%);"></div>
<div class="t" style="left:346px;top:334px;font-size:13px;font-weight:bold;color:#fff;text-shadow:1px 1px 0 #0A2A7A;line-height:16px;letter-spacing:0.35px;">[1]vented : peerles 12`` xxls</div>
<svg class="a" style="left:328px;top:335px" width="11" height="13" shape-rendering="crispEdges" fill="#000"><rect x="7" y="0" width="3" height="1"/><rect x="6" y="1" width="4" height="1"/><rect x="6" y="2" width="3" height="1"/><rect x="6" y="3" width="4" height="1"/><rect x="7" y="4" width="4" height="1"/><rect x="7" y="5" width="4" height="1"/><rect x="3" y="6" width="8" height="1"/><rect x="2" y="7" width="8" height="1"/><rect x="1" y="8" width="4" height="1"/><rect x="1" y="9" width="3" height="1"/><rect x="1" y="10" width="3" height="1"/><rect x="0" y="11" width="4" height="1"/><rect x="1" y="12" width="2" height="1"/></svg>
<div class="xpbtn" style="left:558px;top:331px;background:linear-gradient(135deg,#5C8FF8 0%,#2C64E6 50%,#1E52D8 100%);border-color:#fff"><div class="a" style="left:4px;top:12px;width:8px;height:3px;background:#fff"></div></div><div class="xpbtn" style="left:581px;top:331px;background:linear-gradient(135deg,#3F78EC 0%,#2A62E2 50%,#2358D8 100%);border-color:#7FA6F0"><div class="a" style="left:4px;top:4px;width:11px;height:11px;border:1px solid #7FA6F0;border-top-width:3px;box-sizing:border-box"></div></div><div class="xpbtn" style="left:604px;top:331px;background:linear-gradient(135deg,#F08A60 0%,#E35A2E 50%,#D24A1E 100%);border-color:#fff"><svg class="a" style="left:3px;top:3px" width="14" height="14"><path d="M2 2 L12 12 M12 2 L2 12" stroke="#fff" stroke-width="1.9"/></svg></div>
<div class="a" style="left:325px;top:355px;width:301px;height:200px;background:#ECE9D8"></div>
<div class="a" style="left:325px;top:375px;width:301px;height:1px;background:#fff"></div>
<div class="a" style="left:626px;top:355px;width:4px;height:204px;background:linear-gradient(90deg,#0A3AC8,#0828B0)"></div>
<div class="a" style="left:322px;top:555px;width:308px;height:4px;background:linear-gradient(#0A3AC8,#0626A8)"></div>
<div class="a" style="left:322px;top:355px;width:3px;height:200px;background:linear-gradient(90deg,#1A4CDA,#2A62EA)"></div>
<div class="a" style="left:325px;top:376px;width:1px;height:167px;background:#F4F8FF"></div>
<div class="a" style="left:325px;top:542px;width:301px;height:1px;background:#8A8272"></div>
<div class="a" style="left:325px;top:357px;width:43px;height:18px;background:#F1EFE6"></div>
<div class="a" style="left:367px;top:358px;width:2px;height:17px;background:#85827A"></div>
<div class="t" style="left:334px;top:360px;">Driver</div>
<div class="a" style="left:369px;top:357px;width:41px;height:18px;background:#F1EFE6"></div>
<div class="a" style="left:409px;top:358px;width:2px;height:17px;background:#85827A"></div>
<div class="t" style="left:376px;top:360px;">Box</div>
<div class="a" style="left:411px;top:357px;width:41px;height:18px;background:#F1EFE6"></div>
<div class="t" style="left:417px;top:360px;">Vents</div>
<div class="a" style="left:497px;top:357px;width:42px;height:18px;background:#F1EFE6"></div>
<div class="a" style="left:538px;top:358px;width:2px;height:17px;background:#85827A"></div>
<div class="t" style="left:502px;top:360px;">Project</div>
<div class="a" style="left:452px;top:355px;width:44px;height:21px;background:#ECE9D8"></div>
<div class="a" style="left:495px;top:356px;width:2px;height:19px;background:#85827A"></div>
<div class="t" style="left:459px;top:359px;">Plot</div>
<div class="a" style="left:329px;top:384px;width:104px;height:90px;border:1px solid #C0BCA8;box-sizing:border-box;box-shadow:1px 1px 0 #fff"></div>
<div class="t" style="left:336px;top:379px;background:#ECE9D8;padding:0 1px">SPL:</div>
<div class="t" style="left:337px;top:392px;">Power:</div>
<div class="a" style="left:337px;top:407px;width:72px;height:20px;background:#fff;border-top:2px solid #808080;border-left:2px solid #808080;border-bottom:1px solid #E8E8E8;border-right:1px solid #E8E8E8;box-sizing:border-box"></div>
<div class="t" style="left:340px;top:410px;">1,0</div>
<div class="t" style="left:413px;top:414px;">W</div>
<div class="t" style="left:337px;top:431px;">Distance:</div>
<div class="a" style="left:337px;top:447px;width:72px;height:20px;background:#fff;border-top:2px solid #808080;border-left:2px solid #808080;border-bottom:1px solid #E8E8E8;border-right:1px solid #E8E8E8;box-sizing:border-box"></div>
<div class="t" style="left:340px;top:450px;">1,000</div>
<div class="t" style="left:414px;top:454px;">m</div>
<div class="a" style="left:329px;top:485px;width:104px;height:54px;border:1px solid #C0BCA8;box-sizing:border-box;box-shadow:1px 1px 0 #fff"></div>
<div class="t" style="left:336px;top:480px;background:#ECE9D8;padding:0 1px">Line:</div>
<div class="t" style="left:337px;top:495px;">Color:</div>
<div class="a" style="left:378px;top:492px;width:48px;height:16px;background:#12E612"></div>
<div class="t" style="left:383px;top:493px;color:#0A5A0A">Change</div>
<div class="t" style="left:337px;top:520px;">Width:</div>
<div class="a" style="left:378px;top:512px;width:46px;height:19px;background:#fff;border-top:2px solid #808080;border-left:2px solid #808080;border-bottom:1px solid #E0E0E0;border-right:1px solid #E0E0E0;box-sizing:border-box"></div>
<div class="a" style="left:381px;top:514px;width:25px;height:14px;background:#3A6EC8;outline:1px dotted #000;outline-offset:-1px"></div>
<div class="t" style="left:382px;top:515px;color:#fff">1</div>
<div class="a" style="left:406px;top:514px;width:17px;height:15px;background:#ECE9D8;border-top:1px solid #fff;border-left:1px solid #fff;border-right:1px solid #404040;border-bottom:1px solid #404040;box-sizing:border-box"></div>
<svg class="a" style="left:410px;top:519px" width="9" height="5"><path d="M0 0 H9 L4.5 5 Z" fill="#000"/></svg>
<div class="a" style="left:325px;top:543px;width:301px;height:1px;background:#fff"></div>
<div class="a" style="left:325px;top:544px;width:64px;height:11px;background:#ECE9D8"></div>
<div class="t" style="left:337px;top:544px;font-size:7.5px;line-height:11px;font-weight:bold;letter-spacing:0px">Parameters</div>
<div class="a" style="left:389px;top:544px;width:237px;height:11px;background:#12E612"></div>
<svg class="a" style="left:0;top:0" width="1024" height="768">
<ellipse cx="382" cy="472.5" rx="95" ry="87.5" fill="none" stroke="#1A1A70" stroke-width="1.3"/>
<path d="M556 433 L502 454.5 M503.5 438 L502 454.5 L519.5 458" stroke="#14147A" stroke-width="4.2" fill="none" stroke-linecap="round" stroke-linejoin="round"/>
</svg>
<div class="t" style="left:582px;top:398px;font-family:'Liberation Sans', sans-serif;font-size:25px;line-height:32px;font-weight:bold;color:#FA1690;-webkit-text-stroke:1.5px #FA1690;letter-spacing:0.8px;transform:scaleX(1.11);transform-origin:0 0">mit&auml; n&auml;&auml; tarkottaa?</div>
<svg class="a" style="left:630px;top:398px" width="222" height="30" shape-rendering="crispEdges" opacity="0.45"><rect x="0" y="3" width="222" height="1" fill="#50C050"/><rect x="0" y="16" width="222" height="1" fill="#50C050"/><rect x="21" y="0" width="1" height="30" fill="#50C050"/><rect x="109" y="0" width="1" height="30" fill="#50C050"/><rect x="171" y="0" width="1" height="30" fill="#50C050"/><rect x="219" y="0" width="1" height="30" fill="#50C050"/></svg>
</body></html>
